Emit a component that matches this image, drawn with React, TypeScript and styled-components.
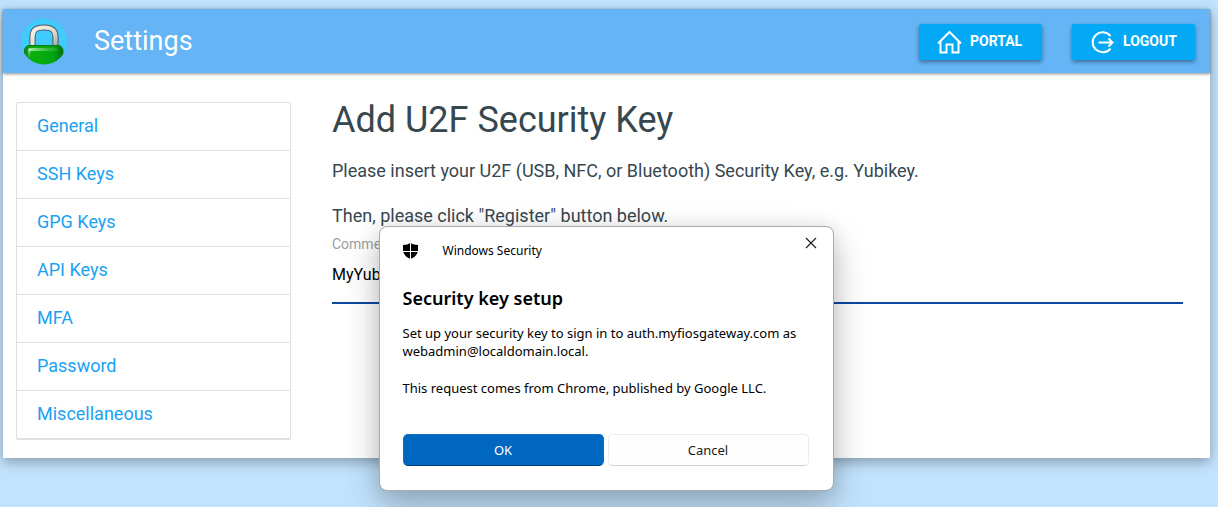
import React from 'react';
import styled, { createGlobalStyle, css } from 'styled-components';

const GlobalStyle = createGlobalStyle`
  *, *::before, *::after { box-sizing: border-box; }
  body {
    margin: 0;
    background: #c3e3fd;
    font-family: Roboto, "Liberation Sans", sans-serif;
    color: #37474f;
  }
`;

const Page = styled.div`
  padding: 9px 8px 49px 3px;
`;

const Card = styled.div`
  position: relative;
  background: #fff;
  box-shadow: 0 4px 12px rgba(0, 0, 0, 0.32);
`;

const Header = styled.header`
  display: flex;
  align-items: center;
  height: 64px;
  padding: 0 15px 0 18px;
  background: #64b4f6;
  box-shadow: 0 1px 3px rgba(0, 0, 0, 0.45);
`;

const Title = styled.div`
  flex: 1;
  margin-left: 26px;
  font-size: 27px;
  line-height: 32px;
  color: #fff;
`;

const Actions = styled.div`
  display: flex;
  gap: 30px;
  padding-top: 2px;
`;

const HeaderButton = styled.button`
  display: flex;
  align-items: center;
  gap: 8px;
  min-width: 123px;
  height: 36px;
  padding: 0 16px 2px 18px;
  border: 0;
  border-radius: 2px;
  background: #03a9f4;
  box-shadow: 0 2px 4px rgba(0, 0, 0, 0.4);
  color: #fff;
  font: 700 14px/20px Roboto, "Liberation Sans", sans-serif;
  cursor: pointer;

  svg { margin-top: 2px; }
`;

const Body = styled.div`
  display: flex;
  align-items: flex-start;
  gap: 41px;
  padding: 29px 27px 18px 13px;
`;

const SideNav = styled.nav`
  flex: none;
  width: 275px;
  border: 1px solid #e0e0e0;
  border-bottom-width: 2px;
  border-radius: 2px;
`;

const NavLink = styled.a`
  display: block;
  padding: 11px 20px 12px;
  font-size: 18px;
  line-height: 24px;
  color: #1ba1f3;
  text-decoration: none;

  & + & { border-top: 1px solid #e0e0e0; }
`;

const Main = styled.main`
  flex: 1;
  min-width: 0;
`;

const Heading = styled.h1`
  margin: 0 0 21px;
  font-size: 36px;
  line-height: 36px;
  font-weight: 400;
`;

const Paragraph = styled.p`
  margin: 0;
  font-size: 18px;
  line-height: 24px;

  & + & { margin-top: 21px; }
`;

const FieldLabel = styled.label`
  display: block;
  margin-top: 6px;
  font-size: 14px;
  line-height: 20px;
  color: #9e9e9e;
`;

const TextInput = styled.input`
  display: block;
  width: 100%;
  height: 50px;
  padding: 0 0 8px;
  border: 0;
  border-bottom: 2px solid #0d47a1;
  outline: none;
  background: transparent;
  font: 400 16px/20px Roboto, "Liberation Sans", sans-serif;
  color: #000;
`;

const Dialog = styled.section`
  position: absolute;
  top: 217px;
  left: 50%;
  width: 455px;
  margin-left: -228px;
  padding: 0 24px 24px 23px;
  border: 1px solid #a9abad;
  border-radius: 8px;
  background: #fff;
  background-clip: padding-box;
  box-shadow: 0 16px 36px rgba(0, 0, 0, 0.24), 0 2px 20px rgba(0, 0, 0, 0.1);
  font-family: "Noto Sans", "Open Sans", sans-serif;
  color: #000;
`;

const DialogBar = styled.div`
  display: flex;
  align-items: center;
  height: 48px;
  font-size: 12px;
  line-height: 16px;
`;

const DialogSource = styled.span`
  flex: 1;
  margin-left: 24px;
`;

const CloseButton = styled.button`
  align-self: flex-start;
  display: grid;
  place-items: center;
  width: 32px;
  height: 32px;
  margin-right: -18px;
  padding: 0;
  border: 0;
  background: transparent;
  color: #1a1a1a;
  cursor: pointer;
`;

const DialogTitle = styled.h2`
  margin: 9px 0 12px;
  font-size: 18px;
  line-height: 28px;
  font-weight: 600;
`;

const DialogText = styled.p`
  margin: 0 0 19px;
  font-size: 13px;
  line-height: 18px;
`;

const DialogActions = styled.div`
  display: grid;
  grid-template-columns: 1fr 1fr;
  gap: 4px;
  margin-top: 37px;
`;

const DialogButton = styled.button<{ $primary?: boolean }>`
  height: 32px;
  padding: 0;
  border-radius: 5px;
  font: 400 13px/18px "Noto Sans", "Open Sans", sans-serif;
  cursor: pointer;
  ${({ $primary }) =>
    $primary
      ? css`
          border: 1px solid #0d70c5;
          border-bottom-color: #003e73;
          background: #0067c0;
          color: #fff;
        `
      : css`
          border: 1px solid #ececec;
          border-bottom-color: #d0d0d0;
          background: #fefefe;
          color: #1b1b1b;
        `}
`;

const LockLogo = () => (
  <svg width="47" height="47" viewBox="0 0 47 47" aria-hidden="true">
    <defs>
      <linearGradient id="shackle" x1="0" y1="0" x2="1" y2="1">
        <stop offset="0" stopColor="#f2f2ec" />
        <stop offset="0.6" stopColor="#dcdcd6" />
        <stop offset="1" stopColor="#a9a9a5" />
      </linearGradient>
      <linearGradient id="lockBody" x1="0" y1="0" x2="1" y2="0">
        <stop offset="0" stopColor="#0a8a12" />
        <stop offset="0.2" stopColor="#08b00c" />
        <stop offset="0.75" stopColor="#04a512" />
        <stop offset="1" stopColor="#02700a" />
      </linearGradient>
      <linearGradient id="shine" x1="0" y1="0" x2="1" y2="0">
        <stop offset="0" stopColor="#d8f8d8" />
        <stop offset="1" stopColor="#3cc43c" stopOpacity="0.3" />
      </linearGradient>
      <linearGradient id="sideShine" x1="0" y1="0" x2="0" y2="1">
        <stop offset="0" stopColor="#d8f8d8" />
        <stop offset="1" stopColor="#3cc43c" stopOpacity="0" />
      </linearGradient>
      <clipPath id="disc"><circle cx="23" cy="23.500" r="23" /></clipPath>
    </defs>
    <circle cx="23" cy="23.500" r="23" fill="#3fcbfe" />
    <g clipPath="url(#disc)">
      <path d="M11.500 29V19C11.500 12 15 9.500 23 9.500S34.500 12 34.500 19V29" fill="none" stroke="#55585a" strokeWidth="6.200" />
      <path d="M11.500 29V19C11.500 12 15 9.500 23 9.500S34.500 12 34.500 19V29" fill="none" stroke="url(#shackle)" strokeWidth="4.200" />
      <rect x="3.500" y="27.500" width="38.500" height="30" rx="5" fill="url(#lockBody)" stroke="#0a7a10" />
      <rect x="8" y="30" width="29" height="3" rx="1.500" fill="url(#shine)" opacity="0.8" />
      <rect x="7" y="30.500" width="2.500" height="12" rx="1.200" fill="url(#sideShine)" opacity="0.8" />
    </g>
  </svg>
);

const HomeIcon = () => (
  <svg width="25" height="24" viewBox="0 0 25 24" fill="none" stroke="currentColor" strokeWidth="2" aria-hidden="true">
    <path d="M1 13.500 12.500 2 24 13.500M3.500 11.500V22.500H9.500V14.500h6V22.500h6V11.500" />
  </svg>
);

const LogoutIcon = () => (
  <svg width="25" height="24" viewBox="0 0 25 24" fill="none" stroke="currentColor" strokeWidth="2" aria-hidden="true">
    <path d="M20.500 6A10 10 0 1 0 20.500 18.500M8.500 12.500H22.500M18.500 8.500l4 4-4 4" />
  </svg>
);

const ShieldIcon = () => (
  <svg width="16" height="16" viewBox="0 0 16 16" aria-hidden="true">
    <path d="M7.500 0q3 2 7.500 2v5.500Q14.800 13 7.500 16 .200 13 0 7.500V2Q4.500 2 7.500 0Z" fill="#000" />
    <path d="M7.500 0v16M0 8.500h16" stroke="#fff" strokeWidth="1" />
  </svg>
);

const CloseIcon = () => (
  <svg width="12" height="12" viewBox="0 0 12 12" stroke="currentColor" strokeWidth="1.100" aria-hidden="true">
    <path d="M1 1l10 10M11 1 1 11" />
  </svg>
);

const sections = ['General', 'SSH Keys', 'GPG Keys', 'API Keys', 'MFA', 'Password', 'Miscellaneous'];

export default function App() {
  return (
    <Page>
      <GlobalStyle />
      <Card>
        <Header>
          <LockLogo />
          <Title>Settings</Title>
          <Actions>
            <HeaderButton type="button"><HomeIcon />PORTAL</HeaderButton>
            <HeaderButton type="button"><LogoutIcon />LOGOUT</HeaderButton>
          </Actions>
        </Header>
        <Body>
          <SideNav>
            {sections.map((name) => (
              <NavLink key={name} href="#">{name}</NavLink>
            ))}
          </SideNav>
          <Main>
            <Heading>Add U2F Security Key</Heading>
            <Paragraph>Please insert your U2F (USB, NFC, or Bluetooth) Security Key, e.g. Yubikey.</Paragraph>
            <Paragraph>Then, please click "Register" button below.</Paragraph>
            <FieldLabel htmlFor="comment">Comment</FieldLabel>
            <TextInput id="comment" type="text" defaultValue="MyYubikey" />
          </Main>
        </Body>
        <Dialog role="dialog" aria-labelledby="dialog-title">
          <DialogBar>
            <ShieldIcon />
            <DialogSource>Windows Security</DialogSource>
            <CloseButton type="button" aria-label="Close"><CloseIcon /></CloseButton>
          </DialogBar>
          <DialogTitle id="dialog-title">Security key setup</DialogTitle>
          <DialogText>
            Set up your security key to sign in to auth.myfiosgateway.com as webadmin@localdomain.local.
          </DialogText>
          <DialogText>This request comes from Chrome, published by Google LLC.</DialogText>
          <DialogActions>
            <DialogButton type="button" $primary>OK</DialogButton>
            <DialogButton type="button">Cancel</DialogButton>
          </DialogActions>
        </Dialog>
      </Card>
    </Page>
  );
}
